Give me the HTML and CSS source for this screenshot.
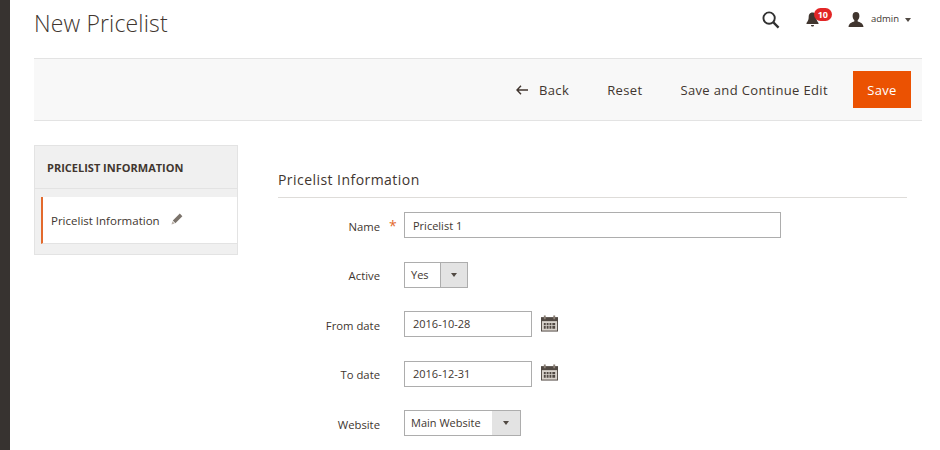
FILE: index.html
```html
<!DOCTYPE html>
<html lang="en">
<head>
<meta charset="utf-8">
<title>New Pricelist</title>
<link rel="stylesheet" href="styles.css">
</head>
<body>
<div class="app">
  <aside class="rail"></aside>
  <main class="main">
    <header class="top">
      <h1 class="title">New Pricelist</h1>
      <div class="tools">
        <svg class="search" width="18" height="18" viewBox="0 0 19 19"><circle cx="7.5" cy="7.5" r="6" fill="none" stroke="#303030" stroke-width="2"/><path d="M12 12l5.500 5.500" stroke="#303030" stroke-width="2.400"/></svg>
        <div class="bell">
          <svg width="13" height="15" viewBox="0 0 13 15"><path d="M6.500 0.500c2.800 0 3.800 2.200 3.800 4.500 0 3 1 4.500 2.200 6v1H0.500v-1c1.200-1.500 2.200-3 2.200-6 0-2.300 1-4.500 3.800-4.500zM5 13h3c0 1-.6 1.500-1.500 1.500S5 14 5 13z" fill="#41362f"/></svg>
          <span class="badge">10</span>
        </div>
        <div class="user">
          <svg width="16" height="15" viewBox="0 0 16 15"><path d="M8 0c2.300 0 3.400 1.600 3.400 3.900 0 1.700-.8 3.300-1.700 4.200v1.400c2 .7 5.300 1.300 5.800 5.500H0.500C1 10.800 4.300 10.200 6.300 9.500V8.100C5.400 7.200 4.600 5.600 4.600 3.900 4.600 1.600 5.700 0 8 0z" fill="#41362f"/></svg>
          <span class="user-name">admin</span>
          <span class="caret small"></span>
        </div>
      </div>
    </header>
    <div class="actions">
      <button class="act back" type="button">
        <svg width="12" height="10" viewBox="0 0 12 10"><path d="M5 .7L1 5l4 4.300M1 5h11" fill="none" stroke="#41362f" stroke-width="1.400"/></svg>
        <span>Back</span>
      </button>
      <button class="act" type="button">Reset</button>
      <button class="act" type="button">Save and Continue Edit</button>
      <button class="save" type="button">Save</button>
    </div>
    <div class="content">
      <nav class="side">
        <div class="side-head">PRICELIST INFORMATION</div>
        <div class="side-gap"></div>
        <div class="side-item">
          <span>Pricelist Information</span>
          <svg width="12" height="12" viewBox="0 0 12 12"><path d="M8.800.6l2.600 2.600-7 7L1.800 7.600z" fill="#7b736b"/><path d="M1.400 8.300l2.300 2.300-3.200.9z" fill="#b8afa7"/></svg>
        </div>
        <div class="side-foot"></div>
      </nav>
      <section class="form">
        <h2 class="form-title">Pricelist Information</h2>
        <div class="rows">
          <label class="lbl">Name<span class="req">*</span></label>
          <div class="ctl"><div class="field wide">Pricelist 1</div></div>
          <label class="lbl">Active</label>
          <div class="ctl"><div class="select sel-yes"><span class="sel-val">Yes</span><span class="sel-btn"><span class="caret"></span></span></div></div>
          <label class="lbl">From date</label>
          <div class="ctl"><div class="field date">2016-10-28</div>
            <svg class="cal" width="17" height="17" viewBox="0 0 18 17"><rect x="0.500" y="2.500" width="17" height="14" fill="#d9d3cc" stroke="#514943"/><rect x="0" y="2" width="18" height="4" fill="#514943"/><rect x="3" y="0" width="2" height="4" fill="#8a7f75"/><rect x="13" y="0" width="2" height="4" fill="#8a7f75"/><path d="M3 8h2v2H3zM6 8h2v2H6zM9 8h2v2H9zM12 8h3v2h-3zM3 11h2v3H3zM6 11h2v3H6zM9 11h2v3H9zM12 11h3v3h-3z" fill="#514943"/></svg>
          </div>
          <label class="lbl">To date</label>
          <div class="ctl"><div class="field date">2016-12-31</div>
            <svg class="cal" width="17" height="17" viewBox="0 0 18 17"><rect x="0.500" y="2.500" width="17" height="14" fill="#d9d3cc" stroke="#514943"/><rect x="0" y="2" width="18" height="4" fill="#514943"/><rect x="3" y="0" width="2" height="4" fill="#8a7f75"/><rect x="13" y="0" width="2" height="4" fill="#8a7f75"/><path d="M3 8h2v2H3zM6 8h2v2H6zM9 8h2v2H9zM12 8h3v2h-3zM3 11h2v3H3zM6 11h2v3H6zM9 11h2v3H9zM12 11h3v3h-3z" fill="#514943"/></svg>
          </div>
          <label class="lbl">Website</label>
          <div class="ctl"><div class="select sel-web"><span class="sel-val">Main Website</span><span class="sel-btn"><span class="caret"></span></span></div></div>
        </div>
      </section>
    </div>
  </main>
</div>
</body>
</html>
```
FILE: styles.css
```css
* { box-sizing: border-box; }
html, body { margin: 0; padding: 0; height: 450px; overflow: hidden; background: #fff; }
body { font-family: "Open Sans", sans-serif; color: #41362f; font-size: 11px; }
.app { display: flex; height: 450px; }
.rail { width: 10px; background: #373330; flex: none; }
.main { width: 888px; margin-left: 24px; flex: none; }
.top { height: 58px; display: flex; justify-content: space-between; align-items: flex-start; }
.title { margin: 8px 0 0 0; font-size: 23px; line-height: 30px; font-weight: 300; letter-spacing: 0.150px; color: #41362f; }
.tools { display: flex; align-items: center; height: 19px; margin-top: 10px; margin-right: 11px; }
.search { margin-right: 26px; }
.bell { position: relative; width: 27px; height: 15px; margin-right: 15px; }
.bell svg { display: block; }
.badge { position: absolute; left: 8px; top: -4px; width: 18px; height: 13px; border-radius: 7px; background: #e22626; color: #fff; font-size: 9px; font-weight: 700; line-height: 13px; text-align: center; }
.user { display: flex; align-items: center; }
.user-name { margin-left: 7px; font-size: 9.500px; line-height: 16px; margin-top: -2px; color: #41362f; }
.caret { display: block; width: 0; height: 0; border-left: 3px solid transparent; border-right: 3px solid transparent; border-top: 4px solid #514943; }
.caret.small { margin-left: 6px; }
.actions { height: 63px; background: #f8f8f8; border-top: 1px solid #e3e3e3; border-bottom: 1px solid #e3e3e3; display: flex; align-items: center; justify-content: flex-end; padding: 0 11px 0 0; }
.act { border: 0; background: none; padding: 0; font: 400 13px/18px "Open Sans", sans-serif; color: #41362f; margin-right: 25px; letter-spacing: 0.360px; display: flex; align-items: center; }
.act + .act { margin-left: 13px; }
.back svg { margin-right: 11px; }
.save { width: 58px; height: 37px; border: 0; background: #eb5202; color: #fff; font: 400 13px/18px "Open Sans", sans-serif; letter-spacing: 0.300px; padding: 0; }
.content { display: flex; margin-top: 24px; }
.side { width: 204px; flex: none; height: 110px; background: #f0f0f0; border: 1px solid #e3e3e3; }
.side-head { height: 42px; padding-left: 12px; font-size: 11px; font-weight: 700; line-height: 44px; color: #41362f; }
.side-gap { height: 9px; border-top: 1px solid #e3e3e3; }
.side-item { height: 47px; margin-left: 6px; background: #fff; border-left: 2px solid #e36a2d; display: flex; align-items: center; padding-left: 8px; font-size: 11.500px; border-bottom: 1px solid #e3e3e3; }
.side-item svg { margin-left: 11px; margin-top: -2px; }
.form { margin-left: 40px; width: 629px; }
.form-title { margin: 24px 0 0; height: 29px; border-bottom: 1px solid #dedcd9; font-size: 14px; font-weight: 400; line-height: 21px; letter-spacing: 0.450px; color: #41362f; }
.rows { display: grid; grid-template-columns: 102px 1fr; column-gap: 24px; row-gap: 23.500px; margin-top: 14px; }
.lbl { display: flex; justify-content: flex-end; align-items: center; height: 26px; padding-top: 2px; font-size: 11.300px; color: #41362f; position: relative; }
.req { position: absolute; left: 111px; top: 4px; color: #e36a2d; font-size: 14px; line-height: 20px; }
.ctl { display: flex; align-items: center; height: 26px; }
.field { height: 26px; border: 1px solid #adadad; background: #fff; padding-left: 8px; line-height: 24px; font-size: 11px; color: #41362f; }
.wide { width: 377px; line-height: 26px; }
.date { width: 128px; }
.cal { margin-left: 9px; margin-top: -2px; }
.select { display: flex; height: 26px; border: 1px solid #adadad; background: #fff; font-size: 11px; line-height: 24px; }
.sel-val { padding-left: 6px; flex: 1; }
.sel-btn { width: 27px; background: #e3e3e3; border-left: 1px solid #adadad; display: flex; align-items: center; justify-content: center; }
.sel-yes { width: 64px; }
.sel-web { width: 117px; }
.sel-web .sel-btn { width: 28px; border-left: 0; }
```
